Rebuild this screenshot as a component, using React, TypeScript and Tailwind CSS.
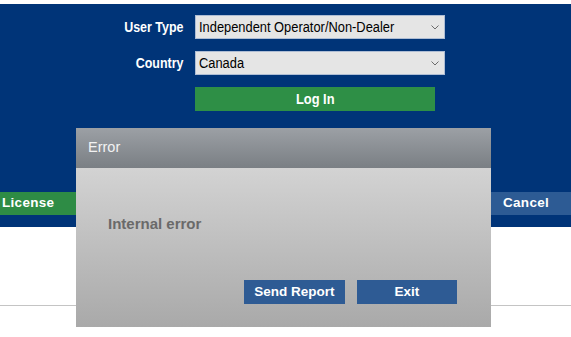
function Narrow({ children, origin }: { children: string; origin: string }) {
  // reference text is horizontally condensed; no narrow face installed, so squeeze it
  return <span className={`inline-block whitespace-nowrap scale-x-[0.83] ${origin}`}>{children}</span>;
}

function FakeSelect({ value }: { value: string }) {
  return (
    <div className="flex h-6 w-[250px] items-center border border-[#aebdd4] bg-[#e5e5e5] pr-[5px] pl-[3px]">
      <span className="min-w-0 flex-1 text-[15.5px] leading-none text-black">
        <Narrow origin="origin-left">{value}</Narrow>
      </span>
      <svg className="shrink-0" width="8" height="5" viewBox="0 0 8 5" aria-hidden="true">
        <path d="M0.5 0.5 L4 4 L7.5 0.5" fill="none" stroke="#6b6b6b" strokeWidth="1" />
      </svg>
    </div>
  );
}

export default function App() {
  return (
    <div className="relative h-[337px] w-[571px] overflow-hidden bg-white font-['Liberation_Sans',Arial,sans-serif]">
      <div className="mt-1 bg-[#003478] pt-[11px] pb-[12px]">
        <div className="ml-[110px] grid w-fit grid-cols-[73px_250px] items-center gap-x-3 gap-y-3">
          <label className="text-right text-[15px] font-bold text-white">
            <Narrow origin="origin-right">User Type</Narrow>
          </label>
          <FakeSelect value="Independent Operator/Non-Dealer" />
          <label className="text-right text-[15px] font-bold text-white">
            <Narrow origin="origin-right">Country</Narrow>
          </label>
          <FakeSelect value="Canada" />
          <span />
          <button className="h-6 w-[240px] bg-[#2e8f46] text-[15.5px] font-bold text-white">
            <Narrow origin="origin-center">Log In</Narrow>
          </button>
        </div>
        <div className="mt-[81px] flex h-[23px] items-stretch justify-between text-[13.5px] font-bold tracking-[0.3px] text-white">
          <button className="w-[110px] bg-[#2e8c45] pl-[2px] text-left">License</button>
          <button className="w-[80px] bg-[#2d5b94] pl-[12px] text-left">Cancel</button>
        </div>
      </div>
      <div className="mt-[78px] h-px bg-[#c4c4c4]" />

      <div className="absolute top-[128px] left-[76px] flex h-[199px] w-[415px] flex-col">
        <div className="flex h-[40px] items-center bg-gradient-to-b from-[#9ca0a5] to-[#7a7f84] pl-3 text-[14.5px] text-[#f2f2f2]">
          Error
        </div>
        <div className="flex flex-1 flex-col bg-gradient-to-b from-[#d3d3d3] to-[#a9a9a9]">
          <p className="pt-[45px] pl-8 text-[15px] font-bold text-[#6a6a6a]">Internal error</p>
          <div className="mt-auto mb-[23px] flex justify-end gap-3 pr-[34px] text-[13.5px] font-bold text-white">
            <button className="h-6 w-[101px] bg-[#2e5b94]">Send Report</button>
            <button className="h-6 w-[100px] bg-[#2e5b94]">Exit</button>
          </div>
        </div>
      </div>
    </div>
  );
}
